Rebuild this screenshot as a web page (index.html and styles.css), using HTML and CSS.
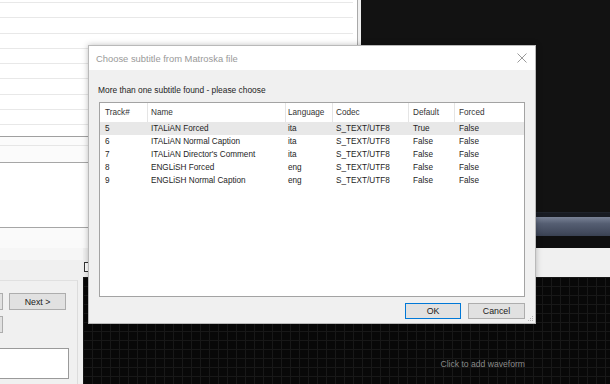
FILE: index.html
```html
<!DOCTYPE html>
<html lang="en">
<head>
    <meta charset="UTF-8">
    <title>Choose subtitle from Matroska file</title>
    <link rel="stylesheet" href="styles.css">
</head>
<body>
<div class="app">
    <div class="top">
        <div class="sub-panel">
            <div class="sub-list">
                <div class="sub-row first"></div>
                <div class="sub-row"></div>
                <div class="sub-row"></div>
                <div class="sub-row"></div>
                <div class="sub-row"></div>
                <div class="sub-row"></div>
                <div class="sub-row"></div>
                <div class="sub-row"></div>
                <div class="sub-row"></div>
                <div class="sub-row last"></div>
            </div>
            <div class="sub-info"></div>
            <div class="sub-text"></div>
            <div class="sub-foot"></div>
        </div>
        <div class="splitter"></div>
        <div class="video">
            <div class="video-screen"></div>
            <div class="video-seam"></div>
            <div class="video-bar"></div>
            <div class="video-foot"></div>
        </div>
    </div>

    <div class="bottom">
        <div class="controls">
            <div class="ctl-band"></div>
            <div class="ctl-group">
                <div class="ctl-row">
                    <span class="btn cut"></span>
                    <span class="btn next">Next &gt;</span>
                </div>
                <div class="ctl-row second">
                    <span class="btn cut"></span>
                </div>
                <div class="ctl-text"></div>
            </div>
        </div>
        <div class="wave-col">
            <div class="wave-tools"><span class="check"></span></div>
            <div class="waveform"><span class="wave-hint">Click to add waveform</span></div>
        </div>
    </div>

    <!-- the modal picker -->
    <div class="dialog">
        <div class="dlg-title">
            <span>Choose subtitle from Matroska file</span>
            <svg class="dlg-close" width="10" height="10" viewBox="0 0 10 10">
                <path d="M0.5 0.5 L9.5 9.5 M9.5 0.5 L0.5 9.5" stroke="#9a9a9a" stroke-width="1" fill="none"/>
            </svg>
        </div>
        <div class="dlg-body">
            <div class="dlg-label">More than one subtitle found - please choose</div>
            <div class="tracks">
                <div class="tr head">
                    <span>Track#</span><span>Name</span><span>Language</span><span>Codec</span><span>Default</span><span>Forced</span>
                </div>
                <div class="tr selected">
                    <span>5</span><span>ITALiAN Forced</span><span>ita</span><span>S_TEXT/UTF8</span><span>True</span><span>False</span>
                </div>
                <div class="tr">
                    <span>6</span><span>ITALiAN Normal Caption</span><span>ita</span><span>S_TEXT/UTF8</span><span>False</span><span>False</span>
                </div>
                <div class="tr">
                    <span>7</span><span>ITALiAN Director's Comment</span><span>ita</span><span>S_TEXT/UTF8</span><span>False</span><span>False</span>
                </div>
                <div class="tr">
                    <span>8</span><span>ENGLiSH Forced</span><span>eng</span><span>S_TEXT/UTF8</span><span>False</span><span>False</span>
                </div>
                <div class="tr">
                    <span>9</span><span>ENGLiSH Normal Caption</span><span>eng</span><span>S_TEXT/UTF8</span><span>False</span><span>False</span>
                </div>
            </div>
            <div class="dlg-buttons">
                <span class="btn ok">OK</span>
                <span class="btn cancel">Cancel</span>
            </div>
        </div>
        <svg class="grip" width="7" height="7" viewBox="0 0 7 7">
            <rect x="5" y="1" width="1" height="1" fill="#b5b5b5"/>
            <rect x="3" y="3" width="1" height="1" fill="#b5b5b5"/>
            <rect x="5" y="3" width="1" height="1" fill="#b5b5b5"/>
            <rect x="1" y="5" width="1" height="1" fill="#b5b5b5"/>
            <rect x="3" y="5" width="1" height="1" fill="#b5b5b5"/>
            <rect x="5" y="5" width="1" height="1" fill="#b5b5b5"/>
        </svg>
    </div>
</div>
</body>
</html>
```

FILE: styles.css
```css
* {
    box-sizing: border-box;
}
body {
    margin: 0;
    font-family: 'Liberation Sans', Arial, sans-serif;
    background: #f0f0f0;
}
.app {
    position: relative;
    width: 610px;
    height: 384px;
    overflow: hidden;
}

/* background window: subtitle grid + video */
.top {
    display: flex;
    height: 248px;
}
.sub-panel {
    width: 358px;
    background: #fff;
    border-right: 1px solid #a9a9a9;
    display: flex;
    flex-direction: column;
}
.sub-list {
    height: 137px;
    border-bottom: 1px solid #a0a0a0;
}
.sub-row {
    height: 15.25px;
    border-bottom: 1px solid #e8e8e8;
    margin-right: 4px;
}
.sub-row.first {
    height: 3px;
}
.sub-row.last {
    border-bottom: none;
}
.sub-info {
    height: 25px;
    background: #fbfbfb;
    border-top: 8px solid #fbfbfb;
    box-shadow: inset 0 9px 0 -8px #e6e6e6;
}
.sub-text {
    height: 66px;
    border-top: 1px solid #a6a6a6;
    border-bottom: 1px solid #a6a6a6;
    background: #fff;
}
.sub-foot {
    flex: 1;
    background: #fafafa;
}
.splitter {
    width: 3px;
    background: #f0f0f0;
}
.video {
    flex: 1;
    display: flex;
    flex-direction: column;
    background: #111;
}
.video-screen {
    height: 212px;
    background: #121212;
}
.video-seam {
    height: 5px;
    background: #181b22;
    border-top: 1px solid #1f232b;
}
.video-bar {
    height: 19px;
    background: linear-gradient(#7a8397, #555e72 35%, #434b5e 80%, #394152);
}
.video-foot {
    flex: 1;
    background: #0f0f10;
}

.bottom {
    display: flex;
    height: 136px;
}
.controls {
    width: 83px;
    background: #f0f0f0;
}
.ctl-band {
    height: 12px;
    background: #f6f6f6;
}
.ctl-group {
    margin-top: 20px;
    width: 78px;
    height: 104px;
    border-top: 1px solid #e0e0e0;
    border-right: 1px solid #dcdcdc;
    padding-top: 12px;
}
.ctl-row {
    display: flex;
    gap: 6px;
}
.ctl-row.second {
    margin-top: 6px;
}
.btn {
    display: flex;
    align-items: center;
    justify-content: center;
    height: 17px;
    background: #e1e1e1;
    border: 1px solid #adadad;
    font-size: 8.8px;
    color: #1a1a1a;
}
.btn.cut {
    width: 53px;
    margin-left: -50px;
}
.btn.next {
    width: 57px;
}
.ctl-text {
    margin: 15px 0 0 -2px;
    width: 71px;
    height: 31px;
    background: #fff;
    border: 1px solid #9a9a9a;
}
.wave-col {
    flex: 1;
    display: flex;
    flex-direction: column;
}
.wave-tools {
    height: 29px;
    background: #f0f0f0;
    padding: 14px 0 0 1px;
}
.check {
    display: block;
    width: 10px;
    height: 10px;
    border: 1px solid #333;
    background: #fff;
}
.waveform {
    flex: 1;
    display: flex;
    justify-content: flex-end;
    align-items: flex-end;
    padding: 0 85px 14px 0;
    background-color: #080808;
    background-image:
        linear-gradient(to right, #181818 1px, transparent 1px),
        linear-gradient(to bottom, #181818 1px, transparent 1px);
    background-size: 9px 9px;
}
.wave-hint {
    font-size: 8.6px;
    line-height: 12px;
    color: #8a8a8a;
}

/* dialog */
.dialog {
    position: absolute;
    left: 88px;
    top: 45px;
    width: 448px;
    height: 279px;
    border: 1px solid #b9b9b9;
    background: #f0f0f0;
    box-shadow: 0 0 6px rgba(0, 0, 0, 0.25);
}
.dlg-title {
    height: 24px;
    background: #fff;
    display: flex;
    align-items: center;
    justify-content: space-between;
    padding: 0 8px 0 7px;
    font-size: 9.4px;
    color: #999;
}
.dlg-close {
    display: block;
}
.dlg-body {
    padding: 14px 10px 0 10px;
}
.dlg-label {
    height: 12px;
    line-height: 12px;
    margin-left: -1px;
    font-size: 8.4px;
    color: #1e1e1e;
}
.tracks {
    margin-top: 6px;
    height: 195px;
    background: #fff;
    border: 1px solid #a3a3a3;
}
.tr {
    display: grid;
    grid-template-columns: 48px 138px 47px 76px 46px 1fr;
    height: 13px;
    line-height: 13px;
    font-size: 8.2px;
    color: #1e1e1e;
}
.tr span {
    padding-left: 4px;
    white-space: nowrap;
}
.tr span:first-child {
    padding-left: 5px;
}
.tr span:nth-child(2) {
    padding-left: 3px;
}
.tr span:nth-child(3) {
    padding-left: 2px;
}
.tr span:nth-child(4) {
    padding-left: 3px;
}
.tr.head {
    height: 19px;
    line-height: 19px;
    color: #333;
}
.tr.head span {
    border-right: 1px solid #e5e5e5;
}
.tr.head span:last-child {
    border-right: none;
}
.tr.selected {
    background: #e8e8e8;
}
.dlg-buttons {
    display: flex;
    justify-content: flex-end;
    gap: 7px;
    margin-top: 6px;
}
.btn.ok {
    width: 56px;
    height: 16px;
    border-color: #0078d7;
}
.btn.cancel {
    width: 57px;
    height: 16px;
}
.grip {
    position: absolute;
    right: 1px;
    bottom: 1px;
}
```
